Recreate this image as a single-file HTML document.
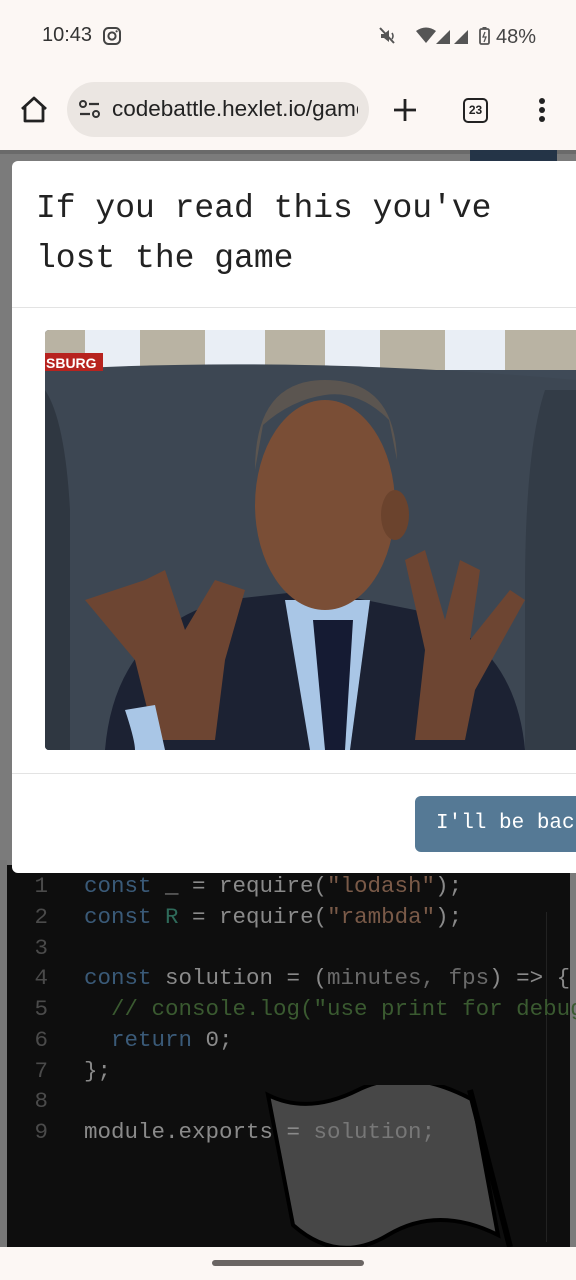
<!DOCTYPE html>
<html><head><meta charset="utf-8"><style>
*{margin:0;padding:0;box-sizing:border-box}
body{width:576px;height:1280px;overflow:hidden;background:#7b7b7b;position:relative;font-family:"Liberation Sans",sans-serif}
.abs{position:absolute}
.mono{font-family:"Liberation Mono","DejaVu Sans Mono",monospace}
</style></head><body>
<div class="abs" style="left:0;top:0;width:576px;height:150px;background:#fcf7f4"></div>
<div class="abs" style="left:42px;top:24px;font-size:20px;color:#333">10:43</div>
<svg class="abs" style="left:102px;top:26px" width="20" height="20" viewBox="0 0 20 20"><rect x="2" y="2" width="16" height="16" rx="4.5" fill="none" stroke="#444" stroke-width="2"/><circle cx="10" cy="10" r="3.6" fill="none" stroke="#444" stroke-width="2"/><circle cx="14.6" cy="5.3" r="1.1" fill="#444"/></svg>
<svg class="abs" style="left:378px;top:26px" width="160" height="20" viewBox="0 0 160 20">
<path d="M3 8h3l5-4v12l-5-4H3z" fill="#555"/><path d="M2 2l14 15" stroke="#555" stroke-width="2"/><path d="M14 7q2 3 0 6" stroke="#555" fill="none" stroke-width="1.6"/>
<path d="M38 5q10-7 20 0l-10 12z" fill="#555"/>
<path d="M58 18l14-14v14z" fill="#555"/><path d="M76 18l14-14v14z" fill="#555"/>
<rect x="102" y="3" width="9" height="15" rx="1.5" fill="none" stroke="#555" stroke-width="1.8"/><rect x="104.5" y="1" width="4" height="2" fill="#555"/><path d="M107 6l-2 5h3l-2 5" stroke="#555" fill="none" stroke-width="1.3"/>
<text x="118" y="17" font-size="20" fill="#444" font-family="Liberation Sans">48%</text></svg>
<svg class="abs" style="left:18px;top:95px" width="32" height="30" viewBox="0 0 32 30"><path d="M4 14L16 3l12 11M7 12v14h18V12" fill="none" stroke="#222" stroke-width="2.8" stroke-linejoin="round"/></svg>
<div class="abs" style="left:67px;top:82px;width:302px;height:55px;border-radius:28px;background:#ebe6e2"></div>
<svg class="abs" style="left:78px;top:99px" width="24" height="22" viewBox="0 0 24 22"><circle cx="5" cy="5" r="3" fill="none" stroke="#333" stroke-width="2"/><path d="M11 5h10M2 15h10" stroke="#333" stroke-width="2.2"/><circle cx="18" cy="15" r="3" fill="none" stroke="#333" stroke-width="2"/></svg>
<div class="abs" style="left:112px;top:96px;width:246px;overflow:hidden;white-space:nowrap;font-size:22.5px;color:#222">codebattle.hexlet.io/game</div>
<svg class="abs" style="left:392px;top:97px" width="26" height="26"><path d="M13 2v22M2 13h22" stroke="#222" stroke-width="2.8"/></svg>
<div class="abs" style="left:463px;top:98px;width:25px;height:25px;border:2.5px solid #222;border-radius:5px;font-size:12px;font-weight:bold;text-align:center;line-height:20px;color:#222">23</div>
<svg class="abs" style="left:536px;top:97px" width="12" height="26"><circle cx="6" cy="4" r="3" fill="#222"/><circle cx="6" cy="13" r="3" fill="#222"/><circle cx="6" cy="22" r="3" fill="#222"/></svg>
<div class="abs" style="left:0;top:150px;width:576px;height:4px;background:#6a6a6a"></div>
<div class="abs" style="left:470px;top:150px;width:87px;height:12px;background:#243447"></div>
<!-- editor -->
<div class="abs" style="left:7px;top:865px;width:563px;height:382px;background:#0e0e0e"></div>
<div class="abs" style="left:0;top:860px;width:7px;height:387px;background:#777"></div>
<div class="abs" style="left:546px;top:912px;width:1px;height:330px;background:#222"></div>
<svg class="abs" style="left:260px;top:1085px" width="260" height="162" viewBox="0 0 260 162"><path d="M8 10q40 20 90-5t115 10l25 135q-60-30-110 0t-95-10z" fill="#474747" stroke="#000" stroke-width="4"/><path d="M210 5l40 157" stroke="#000" stroke-width="6"/></svg>
<div class="abs mono" style="left:20px;top:871px;font-size:22.5px;line-height:30.75px;color:#4a4a4a;white-space:pre;text-align:right;width:28px">1
2
3
4
5
6
7
8
9</div>
<div class="abs mono" style="left:84px;top:871px;font-size:22.5px;line-height:30.75px;color:#8a8a8a;white-space:pre"><span style="color:#3a5a78">const</span> _ = require(<span style="color:#7a5a48">"lodash"</span>);
<span style="color:#3a5a78">const</span> <span style="color:#2e6a5a">R</span> = require(<span style="color:#7a5a48">"rambda"</span>);

<span style="color:#3a5a78">const</span> solution = (<span style="color:#6a6a6a">minutes, fps</span>) => {
  <span style="color:#3a5a30">// console.log("use print for debug")</span>
  <span style="color:#3a5a78">return</span> 0;
};

module.exports = <span style="color:#777">solution;</span></div>
<!-- modal -->
<div class="abs" style="left:12px;top:161px;width:564px;height:712px;background:#fff;border-radius:6px 0 0 6px"></div>
<div class="abs mono" style="left:36px;top:184px;font-size:33px;line-height:50px;color:#222">If you read this you've<br>lost the game</div>
<div class="abs" style="left:12px;top:307px;width:564px;height:1px;background:#e3e3e3"></div>
<svg class="abs" style="left:45px;top:330px;border-radius:4px 0 0 4px" width="531" height="420" viewBox="0 0 531 420">
<rect width="531" height="420" fill="#3f4a57"/>
<rect width="531" height="40" fill="#b9b3a3"/>
<rect x="40" width="55" height="40" fill="#e9eef5"/><rect x="160" width="60" height="40" fill="#e9eef5"/><rect x="280" width="55" height="40" fill="#e9eef5"/><rect x="400" width="60" height="40" fill="#e9eef5"/>
<path d="M0 40q250-15 531 10v370H0z" fill="#3d4753"/>
<path d="M0 60q20 30 25 120v240H0z" fill="#2f3741"/><path d="M500 60q-20 60-20 200v160h51V60z" fill="#333c47"/>
<rect x="0" y="23" width="58" height="18" fill="#b7231f"/><text x="1" y="38" font-size="14" font-weight="bold" fill="#fff" font-family="Liberation Sans">SBURG</text>
<path d="M60 420q10-120 120-150l90 -10 100 20q100 30 110 140z" fill="#1c2233"/>
<path d="M240 270l25 150h40l20-150z" fill="#a9c6e6"/>
<path d="M268 290l12 130h20l8-130z" fill="#151b33"/>
<ellipse cx="280" cy="175" rx="70" ry="105" fill="#7a4e36"/>
<path d="M210 140q0-90 70-90t72 80l-8-40q-30-30-64-25t-62 30z" fill="#5b5550"/>
<ellipse cx="350" cy="185" rx="14" ry="25" fill="#6b432d"/>
<path d="M40 270l50 60 20 80h60l10-80 20-70-30-10-30 50-20-60-20 10z" fill="#6d4532"/>
<path d="M370 410l10-90-20-90 20-10 20 70 15-60 20 10-10 70 40-50 15 10-50 90 -10 50z" fill="#6d4532"/>
<path d="M80 380q10 30 10 40h30l-10-45z" fill="#a9c6e6"/>
</svg>
<div class="abs" style="left:12px;top:773px;width:564px;height:1px;background:#e3e3e3"></div>
<div class="abs mono" style="left:415px;top:796px;width:161px;height:56px;background:#557995;border-radius:6px 0 0 6px;color:#fff;font-size:21px;line-height:56px;padding-left:21px;white-space:nowrap;overflow:hidden">I'll be back</div>
<div class="abs" style="left:0;top:1247px;width:576px;height:33px;background:#fcf7f4"></div>
<div class="abs" style="left:212px;top:1260px;width:152px;height:6px;border-radius:3px;background:#6a6563"></div>
</body></html>
